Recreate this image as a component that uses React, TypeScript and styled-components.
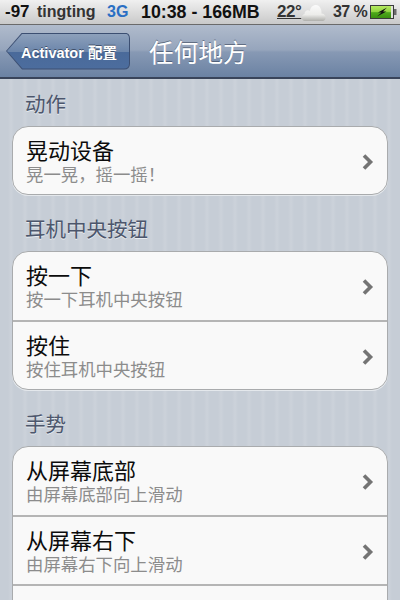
import React from 'react';
import styled, { createGlobalStyle } from 'styled-components';

const sans = `'Liberation Sans', 'Noto Sans CJK SC', sans-serif`;

const GlobalStyle = createGlobalStyle`
  html, body {
    margin: 0;
    padding: 0;
    width: 400px;
    height: 600px;
    overflow: hidden;
  }
`;

interface CellData {
  title: string;
  sub: string;
}

interface SectionData {
  header: string;
  cells: CellData[];
}

// the last cell of the gestures section is cut off by the bottom of the screen
const sections: SectionData[] = [
  { header: '动作', cells: [{ title: '晃动设备', sub: '晃一晃，摇一摇！' }] },
  {
    header: '耳机中央按钮',
    cells: [
      { title: '按一下', sub: '按一下耳机中央按钮' },
      { title: '按住', sub: '按住耳机中央按钮' },
    ],
  },
  {
    header: '手势',
    cells: [
      { title: '从屏幕底部', sub: '由屏幕底部向上滑动' },
      { title: '从屏幕右下', sub: '由屏幕右下向上滑动' },
      { title: '', sub: '' },
    ],
  },
];

const Chevron = () => (
  <ChevronIcon width="12" height="16" viewBox="0 0 12 16">
    <path d="M2 1.5 L8.5 8 L2 14.5" fill="none" stroke="#747474" strokeWidth="3.6" />
  </ChevronIcon>
);

const Cloud = () => (
  <svg width="26" height="20" viewBox="0 0 26 20">
    <defs>
      <linearGradient id="cloudFill" x1="0" y1="0" x2="0" y2="1">
        <stop offset="0" stopColor="#fbfbfb" />
        <stop offset="0.6" stopColor="#ececea" />
        <stop offset="1" stopColor="#aeaeaa" />
      </linearGradient>
    </defs>
    <path
      d="M4 19 C0 19 0 12.5 3.5 12 C3.5 8.5 7 7.5 9 9 C9.5 2.5 18 0.5 20 7.5 C20.5 9 20.5 10 20.5 11.5 C25.5 11.5 26 19 21.5 19 Z"
      fill="url(#cloudFill)"
    />
  </svg>
);

const Battery = () => (
  <svg width="27" height="14" viewBox="0 0 27 14">
    <defs>
      <linearGradient id="batFill" x1="0" y1="0" x2="0" y2="1">
        <stop offset="0" stopColor="#b6ea62" />
        <stop offset="0.5" stopColor="#8ed33f" />
        <stop offset="0.55" stopColor="#4da81a" />
        <stop offset="1" stopColor="#3a8f10" />
      </linearGradient>
    </defs>
    <rect x="0.5" y="0.5" width="23" height="13" fill="#dfe2d8" stroke="#3a3a3a" />
    <rect x="24" y="4" width="2.5" height="6" fill="#6a6a6a" />
    <rect x="1" y="1" width="20" height="12" fill="url(#batFill)" />
    <path d="M17 2.5 L8 7.5 L11.5 7.5 L7 11.5 L16.5 6.5 L13 6.5 Z" fill="#111" />
  </svg>
);

const App: React.FC = () => (
  <Screen>
    <GlobalStyle />
    <StatusBar>
      <Signal>-97</Signal>
      <Carrier>tingting</Carrier>
      <Network>3G</Network>
      <Clock>10:38 - 166MB</Clock>
      <Temp>22°</Temp>
      <Cloud />
      <Percent>37 %</Percent>
      <Battery />
    </StatusBar>
    <NavBar>
      <BackButton>
        <BackInner>Activator 配置</BackInner>
      </BackButton>
      <NavTitle>任何地方</NavTitle>
    </NavBar>
    <Content>
      {sections.map((section) => (
        <section key={section.header}>
          <SectionHeader>{section.header}</SectionHeader>
          <Card>
            {section.cells.map((cell) => (
              <Cell key={cell.title}>
                {cell.title && (
                  <>
                    <CellText>
                      <CellTitle>{cell.title}</CellTitle>
                      <CellSub>{cell.sub}</CellSub>
                    </CellText>
                    <Chevron />
                  </>
                )}
              </Cell>
            ))}
          </Card>
        </section>
      ))}
    </Content>
  </Screen>
);

const Screen = styled.div`
  width: 400px;
  height: 600px;
  overflow: hidden;
  display: flex;
  flex-direction: column;
  font-family: ${sans};
  background: repeating-linear-gradient(
    90deg,
    #c6cdd6 0,
    #c6cdd6 8px,
    #ccd2da 11px,
    #c6cdd6 14px
  );
`;

const StatusBar = styled.div`
  height: 25px;
  flex: none;
  box-sizing: border-box;
  display: flex;
  align-items: center;
  padding: 0 0 0 5px;
  background: linear-gradient(#f0f0f0, #c9c9c9);
  border-bottom: 1px solid #6a6a6a;
  font-size: 17px;
  font-weight: bold;
  color: #111;
  white-space: nowrap;
`;

const Signal = styled.span`
  width: 32px;
`;

const Carrier = styled.span`
  width: 70px;
  color: #333;
  font-size: 16px;
`;

const Network = styled.span`
  width: 34px;
  color: #2a6fc4;
  font-size: 16px;
`;

const Clock = styled.span`
  width: 136px;
  font-size: 17.8px;
`;

const Temp = styled.span`
  color: #333;
  font-size: 17px;
  text-decoration: underline;
  width: 24px;
  letter-spacing: -0.5px;
`;

const Percent = styled.span`
  color: #333;
  font-size: 16px;
  width: 37px;
  margin-left: 6px;
  letter-spacing: -0.6px;
`;

const NavBar = styled.div`
  height: 54px;
  flex: none;
  box-sizing: border-box;
  display: flex;
  align-items: center;
  padding: 0 0 0 6px;
  background: linear-gradient(#b0bbcc 0%, #96a5bc 48%, #8799b4 52%, #6b82a3 100%);
  border-bottom: 2px solid #39445a;
`;

const BackButton = styled.div`
  width: 124px;
  height: 37px;
  flex: none;
  background: #3c4f72;
  clip-path: path('M0 18.5 L16 0 L118 0 Q124 0 124 6 L124 31 Q124 37 118 37 L16 37 Z');
  display: flex;
`;

const BackInner = styled.div`
  width: 122px;
  height: 35px;
  margin: 1px;
  box-sizing: border-box;
  padding-left: 14px;
  display: flex;
  align-items: center;
  background: linear-gradient(#8da0bb 0%, #6c86ab 50%, #4a6a9a 52%, #4c6d9e 100%);
  clip-path: path('M0 17.5 L15.5 0 L117 0 Q122 0 122 5 L122 30 Q122 35 117 35 L15.5 35 Z');
  color: #fff;
  font-size: 14.5px;
  font-weight: bold;
  white-space: nowrap;
  text-shadow: 0 -1px 0 rgba(30, 40, 60, 0.6);
`;

const NavTitle = styled.h1`
  margin: 0 0 0 19px;
  color: #fff;
  font-size: 24.5px;
  font-weight: normal;
  letter-spacing: 0.2px;
  text-shadow: 0 -1px 0 rgba(40, 50, 70, 0.5);
`;

const Content = styled.div`
  flex: 1;
  padding: 0 12px;
`;

const SectionHeader = styled.h2`
  margin: 0;
  height: 47px;
  box-sizing: border-box;
  padding: 14px 0 0 13px;
  color: #4c566c;
  font-size: 20.5px;
  line-height: 24px;
  font-weight: normal;
  text-shadow: 0 1px 0 #e8ecf0;
`;

const Card = styled.div`
  margin-bottom: 9px;
  background: #f9f9f9;
  border: 1px solid #a9abad;
  border-radius: 16px;
  overflow: hidden;
  box-shadow: 0 1px 0 #e4e8ec;
`;

const Cell = styled.div`
  height: 67px;
  box-sizing: border-box;
  display: flex;
  align-items: center;
  justify-content: space-between;
  padding: 2px 13px 0 13px;

  &:first-child:not(:last-child) {
    height: 68px;
  }

  & + & {
    height: 69px;
    border-top: 2px solid #b5b5b5;
  }
`;

const CellText = styled.div`
  display: flex;
  flex-direction: column;
`;

const CellTitle = styled.div`
  color: #0c0c0c;
  font-size: 22px;
  line-height: 26px;
  font-weight: normal;
`;

const CellSub = styled.div`
  color: #8c8c8c;
  font-size: 17.4px;
  line-height: 20px;
  white-space: nowrap;
`;

const ChevronIcon = styled.svg`
  flex: none;
`;

export default App;
